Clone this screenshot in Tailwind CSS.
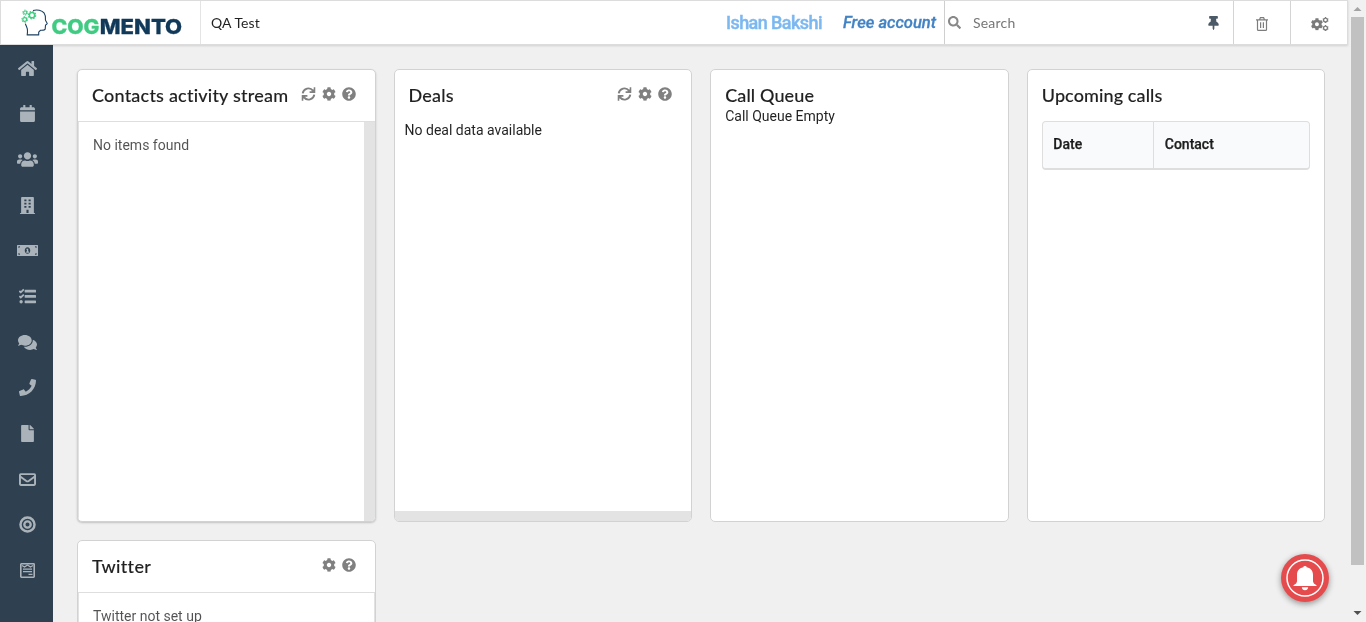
<!DOCTYPE html>
<html lang="en">
<head>
<meta charset="utf-8">
<title>Cogmento CRM</title>
<script src="https://cdn.jsdelivr.net/npm/@tailwindcss/browser@4"></script>
</head>
<body class="h-[622px] w-[1366px] overflow-hidden bg-[#f0f0f0] font-['Roboto',sans-serif] text-sm text-black/87 [font-variant-ligatures:none]">
<svg class="hidden">
  <symbol id="cog" viewBox="0 0 512 512"><path d="M487.4 315.7l-42.6-24.6c4.3-23.2 4.3-47 0-70.2l42.6-24.6c4.9-2.8 7.1-8.6 5.5-14-11.1-35.6-30-67.8-54.7-94.6-3.8-4.1-10-5.1-14.8-2.3L380.8 110c-17.9-15.4-38.5-27.3-60.8-35.1V25.8c0-5.6-3.9-10.5-9.4-11.7-36.7-8.2-74.3-7.8-109.2 0-5.5 1.2-9.4 6.1-9.4 11.7V75c-22.2 7.9-42.8 19.8-60.8 35.1L88.7 85.500c-4.9-2.8-11-1.9-14.8 2.300-24.700 26.700-43.600 58.900-54.700 94.600-1.700 5.400.6 11.200 5.500 14L67.300 221c-4.300 23.200-4.300 47 0 70.200l-42.600 24.600c-4.900 2.800-7.100 8.600-5.500 14 11.100 35.600 30 67.800 54.700 94.600 3.800 4.100 10 5.100 14.800 2.300l42.600-24.600c17.900 15.400 38.500 27.300 60.800 35.100v49.200c0 5.600 3.900 10.500 9.400 11.700 36.700 8.200 74.300 7.800 109.200 0 5.500-1.200 9.400-6.100 9.400-11.700v-49.200c22.200-7.900 42.800-19.800 60.800-35.100l42.600 24.600c4.900 2.800 11 1.900 14.800-2.300 24.700-26.700 43.600-58.900 54.700-94.600 1.500-5.500-.7-11.300-5.600-14.100zM256 336c-44.100 0-80-35.900-80-80s35.900-80 80-80 80 35.900 80 80-35.900 80-80 80z"/></symbol>
  <symbol id="help" viewBox="0 0 512 512"><path d="M504 256c0 136.997-111.043 248-248 248S8 392.997 8 256C8 119.083 119.043 8 256 8s248 111.083 248 248zM262.655 90c-54.497 0-89.255 22.957-116.549 63.758-3.536 5.286-2.353 12.415 2.715 16.258l34.699 26.31c5.205 3.947 12.621 3.008 16.665-2.122 17.864-22.658 30.113-35.797 57.303-35.797 20.429 0 45.698 13.148 45.698 32.958 0 14.976-12.363 22.667-32.534 33.976C247.128 238.528 216 254.941 216 296v4c0 6.627 5.373 12 12 12h56c6.627 0 12-5.373 12-12v-1.333c0-28.462 83.186-29.647 83.186-106.667 0-58.002-60.165-102-116.531-102zM256 338c-25.365 0-46 20.635-46 46 0 25.364 20.635 46 46 46s46-20.636 46-46c0-25.365-20.635-46-46-46z"/></symbol>
  <symbol id="refresh" viewBox="0 0 512 512"><path fill="none" stroke="currentColor" stroke-width="70" d="M44 232A214 214 0 0 1 420 130M468 280A214 214 0 0 1 92 382"/><path d="M504 8V216H296V158H370L446 82V8zM8 504V296H216V354H142L66 430V504z"/></symbol>
</svg>

<div class="flex h-full">
  <div class="flex w-[1350px] flex-col">
    <header class="relative z-10 flex h-[45px] w-[1348px] shrink-0 border-t border-r border-b border-l border-[#dcdcdc] bg-white shadow-[0_1px_2px_rgba(34,36,38,.15)]">
      <div class="flex w-[200px] shrink-0 border-r border-[#e4e4e4]">
        <svg class="h-[43px] w-[199px]" viewBox="1 1 199 43">
          <g fill="none" stroke="#1a4060" stroke-width="1.1" stroke-linejoin="round"><path d="M33 10.5C37 9.4 42 10.2 44.2 13.2C45.9 15.7 45.4 18 45.4 19.8C45.5 21 47 22.5 47.2 23.7C47 24.5 45.7 24.4 45.5 25.3L45.2 29C44.7 30.6 42.3 30.2 40.4 30.3L38.7 32.2V34.9H27.2L27.5 31.9C28.3 28.8 26.2 26.6 25.3 23.6"/></g>
          <g fill="none" stroke="#3fcb82"><circle cx="32" cy="15.2" r="2.6" stroke-width="1.5"/><circle cx="32" cy="15.2" r="3.7" stroke-width="1.2" stroke-dasharray="1.5 1.4"/><circle cx="25.2" cy="12.6" r="1.6" stroke-width="1.1"/><circle cx="25.2" cy="12.6" r="2.5" stroke-width="1" stroke-dasharray="1.3 1.32"/><circle cx="24.7" cy="19.5" r="1.9" stroke-width="1.2"/><circle cx="24.7" cy="19.5" r="2.9" stroke-width="1" stroke-dasharray="1.5 1.54"/></g>
          <text x="51.500" y="34.300" font-family="Inter, sans-serif" font-weight="800" font-size="20.500" textLength="48" lengthAdjust="spacingAndGlyphs" fill="#3fcb82" stroke="#3fcb82" stroke-width=".3">COG</text>
          <text x="99.700" y="34.300" font-family="Inter, sans-serif" font-weight="800" font-size="20.500" textLength="82.500" lengthAdjust="spacingAndGlyphs" fill="#11395a" stroke="#11395a" stroke-width=".3">MENTO</text>
        </svg>
      </div>
      <div class="flex flex-1 items-center pl-[10px] font-['Lato',sans-serif] tracking-[0.1px]">QA Test</div>
      <div class="w-[117px] pt-[11px] text-[18px] leading-[22px] font-medium tracking-[-0.58px] whitespace-nowrap text-[#7cb8f0] [-webkit-text-stroke:0.4px]">Ishan Bakshi</div>
      <div class="w-[101px] pt-[11px] text-[16.5px] leading-[22px] font-medium tracking-[0.02px] whitespace-nowrap text-[#4183c4] italic [-webkit-text-stroke:0.3px]">Free account</div>
      <div class="flex w-[289px] items-center border-l border-[#cfcfcf] pl-[3px]">
        <svg class="h-[13px] w-[13px] fill-[#888]" viewBox="0 0 512 512"><path d="M505 442.7L405.3 343c-4.5-4.5-10.6-7-17-7H372c27.6-35.3 44-79.7 44-128C416 93.1 322.9 0 208 0S0 93.1 0 208s93.1 208 208 208c48.3 0 92.7-16.4 128-44v16.3c0 6.4 2.5 12.5 7 17l99.7 99.7c9.4 9.4 24.6 9.4 33.9 0l28.3-28.3c9.4-9.4 9.4-24.6.1-34zM208 336c-70.7 0-128-57.2-128-128 0-70.7 57.2-128 128-128 70.7 0 128 57.2 128 128 0 70.7-57.2 128-128 128z"/></svg>
        <span class="ml-[12px] flex-1 font-['Lato',sans-serif] tracking-[0.2px] text-[#777]">Search</span>
        <svg class="mr-[14px] h-[14px] w-[11px] fill-[#4c5a67]" viewBox="0 0 384 512"><path d="M298.028 214.267L285.793 96H328c13.255 0 24-10.745 24-24V24c0-13.255-10.745-24-24-24H56C42.745 0 32 10.745 32 24v48c0 13.255 10.745 24 24 24h42.207L85.972 214.267C37.465 236.82 0 277.261 0 328c0 13.255 10.745 24 24 24h136v104.007l24.845 51.578h14.311L224 456.007V352h136c13.255 0 24-10.745 24-24-.001-51.183-37.983-91.42-85.973-113.733z"/></svg>
      </div>
      <div class="flex w-[57px] items-center justify-center border-l border-[#d4d4d4] pt-[3px]">
        <svg class="h-[14px] w-[12px]" viewBox="0 0 12 14" fill="none" stroke="#7d7d7d" stroke-width="1.2"><path d="M0 2.8H12M3.6 2.6L4.4.7H7.6L8.4 2.6M1.5 3V12.4Q1.5 13.3 2.4 13.3H9.6Q10.5 13.3 10.5 12.4V3M4.6 5.3V11M7.4 5.3V11"/></svg>
      </div>
      <div class="flex w-[57px] items-center justify-center border-l border-[#d4d4d4] pt-[2px] pl-[2px]">
        <svg class="h-[14px] w-[18px] text-[#7a7a7a]" viewBox="0 0 18 14" fill="currentColor"><use href="#cog" x="-.3" y="1" width="12.500" height="12.500"/><g fill="none" stroke="currentColor" stroke-width="1.3"><circle cx="14.5" cy="3" r="1.9"/><circle cx="14.5" cy="11" r="1.9"/></g><path d="M14 0h1v1h-1zM14 13h1v1h-1zM14 5h1v1h-1zM14 8h1v1h-1zM11.7 1.4h1v1h-1zM16.4 1.4h1v1h-1zM11.7 3.6h1v1h-1zM16.4 3.6h1v1h-1zM11.7 9.4h1v1h-1zM16.4 9.4h1v1h-1zM11.7 11.6h1v1h-1zM16.4 11.6h1v1h-1z"/></svg>
      </div>
    </header>

    <div class="flex flex-1">
      <nav class="flex w-[53px] shrink-0 flex-col fill-[#abb3ba] pt-[0.5px] pl-[2.500px] text-[#abb3ba]">
        <div class="flex h-[45.65px] items-center justify-center"><svg class="h-[17px] w-[19px]" viewBox="0 0 576 512"><path d="M280.37 148.26L96 300.11V464a16 16 0 0 0 16 16l112.06-.29a16 16 0 0 0 15.92-16V368a16 16 0 0 1 16-16h64a16 16 0 0 1 16 16v95.64a16 16 0 0 0 16 16.05L464 480a16 16 0 0 0 16-16V300L295.67 148.26a12.19 12.19 0 0 0-15.3 0zM571.6 251.47L488 182.56V44.05a12 12 0 0 0-12-12h-56a12 12 0 0 0-12 12v72.61L318.47 43a48 48 0 0 0-61 0L4.34 251.47a12 12 0 0 0-1.6 16.9l25.5 31A12 12 0 0 0 45.15 301l235.22-193.74a12.19 12.19 0 0 1 15.3 0L530.9 301a12 12 0 0 0 16.9-1.6l25.5-31a12 12 0 0 0-1.7-16.93z"/></svg></div>
        <div class="flex h-[45.65px] items-center justify-center"><svg class="h-[17px] w-[15px]" viewBox="0 0 448 512"><path d="M12 192h424c6.600 0 12 5.400 12 12v260c0 26.500-21.500 48-48 48H48c-26.500 0-48-21.500-48-48V204c0-6.600 5.400-12 12-12zm436-44v-36c0-26.500-21.500-48-48-48h-48V12c0-6.600-5.400-12-12-12h-40c-6.600 0-12 5.400-12 12v52H160V12c0-6.600-5.400-12-12-12h-40c-6.600 0-12 5.400-12 12v52H48C21.500 64 0 85.500 0 112v36c0 6.600 5.400 12 12 12h424c6.600 0 12-5.400 12-12z"/></svg></div>
        <div class="flex h-[45.65px] items-center justify-center"><svg class="h-[17px] w-[21px]" viewBox="0 0 640 512"><path d="M96 224c35.3 0 64-28.7 64-64s-28.7-64-64-64-64 28.7-64 64 28.7 64 64 64zm448 0c35.3 0 64-28.7 64-64s-28.7-64-64-64-64 28.7-64 64 28.7 64 64 64zm32 32h-64c-17.6 0-33.5 7.1-45.100 18.600 40.300 22.100 68.900 62 75.100 109.400h66c17.700 0 32-14.300 32-32v-32c0-35.300-28.700-64-64-64zm-256 0c61.900 0 112-50.100 112-112S381.900 32 320 32 208 82.100 208 144s50.100 112 112 112zm76.800 32h-8.300c-20.800 10-43.900 16-68.500 16s-47.600-6-68.500-16h-8.300C179.600 288 128 339.600 128 403.200V432c0 26.500 21.500 48 48 48h288c26.500 0 48-21.500 48-48v-28.800c0-63.600-51.600-115.200-115.200-115.200zm-223.700-13.400C161.500 263.100 145.600 256 128 256H64c-35.300 0-64 28.700-64 64v32c0 17.700 14.300 32 32 32h65.900c6.300-47.400 34.900-87.300 75.200-109.400z"/></svg></div>
        <div class="flex h-[45.65px] items-center justify-center"><svg class="h-[17px] w-[15px]" viewBox="0 0 448 512"><path fill-rule="evenodd" d="M436 480h-20V24c0-13-11-24-24-24H56C43 0 32 11 32 24v456H12c-7 0-12 5-12 12v20h448v-20c0-7-5-12-12-12zM128 76h64v52h-64zM256 76h64v52h-64zM128 172h64v52h-64zM256 172h64v52h-64zM128 268h64v52h-64zM256 268h64v52h-64zM192 384h64v96h-64z"/></svg></div>
        <div class="flex h-[45.65px] items-center justify-center"><svg class="h-[17px] w-[21px]" viewBox="0 0 640 512"><path fill-rule="evenodd" d="M0 104Q0 88 16 88H624Q640 88 640 104V408Q640 424 624 424H16Q0 424 0 408zM320 158C270 158 236 202 236 256S270 354 320 354 404 310 404 256 370 158 320 158zM44 128v50q50 0 50-50zM596 128v50q-50 0-50-50zM44 384v-50q50 0 50 50zM596 384v-50q-50 0-50 50z"/><path d="M290 200H342V290H364V322H280V290H302V232H282z"/></svg></div>
        <div class="flex h-[45.65px] items-center justify-center"><svg class="h-[17px] w-[17px]" viewBox="0 0 512 512"><path d="M186 56h310q16 0 16 16v50q0 16-16 16H186q-16 0-16-16V72q0-16 16-16zM186 214h310q16 0 16 16v50q0 16-16 16H186q-16 0-16-16v-50q0-16 16-16zM186 374h310q16 0 16 16v50q0 16-16 16H186q-16 0-16-16v-50q0-16 16-16z"/><circle cx="64" cy="415" r="50"/><path fill="none" stroke="currentColor" stroke-width="56" d="M10 88L54 130L146 42M10 244L54 286L146 198"/></svg></div>
        <div class="flex h-[45.65px] items-center justify-center"><svg class="h-[17px] w-[19px]" viewBox="0 0 576 512"><path d="M416 192c0-88.4-93.100-160-208-160S0 103.600 0 192c0 34.300 14.100 65.900 38 92-13.400 30.200-35.500 54.200-35.800 54.500-2.200 2.300-2.800 5.700-1.500 8.700S4.800 352 8 352c36.600 0 66.900-12.300 88.700-25 32.200 15.700 70.300 25 111.300 25 114.900 0 208-71.600 208-160zm122 220c23.900-26 38-57.700 38-92 0-66.900-53.500-124.200-129.300-148.100.9 6.600 1.300 13.300 1.300 20.100 0 105.900-107.700 192-240 192-10.800 0-21.300-.8-31.700-1.900C207.800 439.600 281.800 480 368 480c41 0 79.100-9.200 111.300-25 21.800 12.700 52.100 25 88.700 25 3.200 0 6.100-1.900 7.300-4.800 1.300-2.900.7-6.300-1.500-8.700-.3-.3-22.400-24.200-35.800-54.500z"/></svg></div>
        <div class="flex h-[45.65px] items-center justify-center"><svg class="h-[17px] w-[17px]" viewBox="0 0 512 512"><path d="M493.400 24.600l-104-24c-11.300-2.600-22.900 3.300-27.500 13.900l-48 112c-4.200 9.800-1.400 21.300 6.900 28l60.600 49.600c-36 76.700-98.900 140.500-177.200 177.200l-49.600-60.600c-6.800-8.300-18.200-11.100-28-6.900l-112 48C3.900 366.500-2 378.100.6 389.400l24 104C27.100 504.200 36.700 512 48 512c256.100 0 464-207.500 464-464 0-11.200-7.700-20.900-18.600-23.400z"/></svg></div>
        <div class="flex h-[45.65px] items-center justify-center"><svg class="h-[17px] w-[13px]" viewBox="0 0 384 512"><path d="M224 136V0H24C10.700 0 0 10.700 0 24v464c0 13.300 10.700 24 24 24h336c13.300 0 24-10.700 24-24V160H248c-13.200 0-24-10.800-24-24zm160-14.100v6.100H256V0h6.100c6.400 0 12.500 2.500 17 7l97.900 98c4.500 4.500 7 10.600 7 16.900z"/></svg></div>
        <div class="flex h-[45.65px] items-center justify-center"><svg class="h-[17px] w-[17px]" viewBox="0 0 512 512"><g fill="none" stroke="currentColor" stroke-width="58"><rect x="29" y="93" width="454" height="326" rx="24"/><path d="M36 166L220 300Q256 324 292 300L476 166"/></g></svg></div>
        <div class="flex h-[45.65px] items-center justify-center"><svg class="h-[17px] w-[17px]" viewBox="0 0 512 512"><g fill="none" stroke="currentColor"><circle cx="256" cy="256" r="212" stroke-width="74"/><circle cx="256" cy="256" r="96" stroke-width="70"/></g></svg></div>
        <div class="flex h-[45.65px] items-center justify-center"><svg class="h-[15px] w-[15px]" viewBox="0 0 15 15"><g fill="none" stroke="currentColor"><rect x=".8" y=".8" width="13.400" height="13.400" rx=".6" stroke-width="1.600"/><path stroke-width="1.300" d="M2 2.500L4.500 4L7.500 2L10.500 4L13 2.500M3 6.200H12M3 8.700H12M8.500 11.300H12.500"/></g></svg></div>
      </nav>

      <main class="grid w-[1272.4px] shrink-0 grid-cols-4 content-start gap-x-[18px] gap-y-[18px] pt-[24px] pl-[24px]">
        <section class="flex h-[453px] flex-col overflow-hidden rounded-[5px] border border-[#d2d2d2] bg-white shadow-[0_1px_2px_rgba(34,36,38,.22)]">
          <div class="flex h-[52px] items-start border-b border-[#dedede] pt-[13px] pl-[14px]">
            <h2 class="flex-1 font-['Lato',sans-serif] text-[18px] leading-[24px] font-medium tracking-[0.21px] whitespace-nowrap [-webkit-text-stroke:0.12px]">Contacts activity stream</h2>
            <div class="flex gap-[6px] fill-[#808080] pt-[4px] pr-[18.500px] text-[#808080]"><svg class="h-[14px] w-[15px]"><use href="#refresh"/></svg><svg class="h-[14px] w-[14px]"><use href="#cog"/></svg><svg class="h-[14px] w-[14px]"><use href="#help"/></svg></div>
          </div>
          <div class="flex flex-1 border-l border-[#e2e2e2]">
            <p class="flex-1 pt-[13px] pl-[14px] text-black/68">No items found</p>
            <div class="w-[11px] bg-[#e3e3e3]"></div>
          </div>
        </section>

        <section class="flex h-[453px] flex-col overflow-hidden rounded-[5px] border border-[#d2d2d2] bg-white">
          <div class="flex h-[50px] items-start pt-[13px] pl-[14px]">
            <h2 class="flex-1 font-['Lato',sans-serif] text-[18px] leading-[24px] font-medium tracking-[0.21px] [-webkit-text-stroke:0.12px]">Deals</h2>
            <div class="flex gap-[6px] fill-[#808080] pt-[4px] pr-[19px] text-[#808080]"><svg class="h-[14px] w-[15px]"><use href="#refresh"/></svg><svg class="h-[14px] w-[14px]"><use href="#cog"/></svg><svg class="h-[14px] w-[14px]"><use href="#help"/></svg></div>
          </div>
          <p class="flex-1 pl-[10px]">No deal data available</p>
          <div class="h-[10px] bg-[#e3e3e3]"></div>
        </section>

        <section class="h-[453px] rounded-[5px] border border-[#d2d2d2] bg-white pt-[13px] pl-[14px]">
          <h2 class="font-['Lato',sans-serif] text-[18px] leading-[24px] font-medium tracking-[0.13px] [-webkit-text-stroke:0.12px]">Call Queue</h2>
          <p class="leading-[18px]">Call Queue Empty</p>
        </section>

        <section class="h-[453px] rounded-[5px] border border-[#d2d2d2] bg-white px-[14px] pt-[13px]">
          <h2 class="font-['Lato',sans-serif] text-[18px] leading-[24px] font-medium tracking-[0.11px] [-webkit-text-stroke:0.12px]">Upcoming calls</h2>
          <div class="mt-[14px] flex h-[49px] rounded-[4px] border border-b-2 border-[#dededf] bg-[#f9fafb] font-medium [-webkit-text-stroke:0.25px]">
            <div class="flex w-[111px] items-center border-r border-[#dededf] pb-[2px] pl-[10.500px]">Date</div>
            <div class="flex flex-1 items-center pb-[2px] pl-[11px]">Contact</div>
          </div>
        </section>

        <section class="flex h-[453px] flex-col overflow-hidden rounded-[5px] border border-[#d2d2d2] bg-white">
          <div class="flex h-[52px] shrink-0 items-start border-b border-[#dedede] pt-[13px] pl-[14px]">
            <h2 class="flex-1 font-['Lato',sans-serif] text-[18px] leading-[24px] font-medium tracking-[0.35px] [-webkit-text-stroke:0.12px]">Twitter</h2>
            <div class="flex gap-[6px] fill-[#808080] pt-[4px] pr-[18.500px] text-[#808080]"><svg class="h-[14px] w-[14px]"><use href="#cog"/></svg><svg class="h-[14px] w-[14px]"><use href="#help"/></svg></div>
          </div>
          <p class="flex-1 border-x border-[#e2e2e2] pt-[13px] pl-[14px] text-black/68">Twitter not set up</p>
        </section>
      </main>
    </div>
  </div>

  <div class="flex w-4 flex-col items-start bg-[#f1f1f1] pl-px">
    <svg class="h-[17px] w-[13px]" viewBox="0 0 13 17"><path d="M2.500 11L6.500 7L10.500 11z" fill="#a3a3a3"/></svg>
    <div class="h-[548px] w-[13px] bg-[#c1c1c1]"></div>
    <svg class="mt-auto h-[17px] w-[13px]" viewBox="0 0 13 17"><path d="M2.500 6L6.500 10L10.500 6z" fill="#505050"/></svg>
  </div>
</div>

<div class="fixed top-[45px] left-0 -z-10 h-[577px] w-[53px] bg-[#2f4050]"></div>
<div class="fixed top-[554px] left-[1281px] flex h-12 w-12 items-center justify-center rounded-full bg-[#e54b4d] shadow-[0_2px_6px_rgba(0,0,0,.4)]">
  <svg class="h-[38px] w-[38px] fill-white" viewBox="-7 -6 38 38"><circle cx="12" cy="13" r="18" fill="none" stroke="#fff" stroke-width="1.500"/><path d="M12 1Q13.500 1 13.800 2.200C18 3 20 6 20 10V16.500Q20 18.500 23.500 20.300V21H.5V20.300Q4 18.500 4 16.500V10C4 6 6 3 10.200 2.200Q10.500 1 12 1zM8.800 22.300H15.200Q14.800 25.300 12 25.300T8.800 22.300z"/></svg>
</div>
</body>
</html>
